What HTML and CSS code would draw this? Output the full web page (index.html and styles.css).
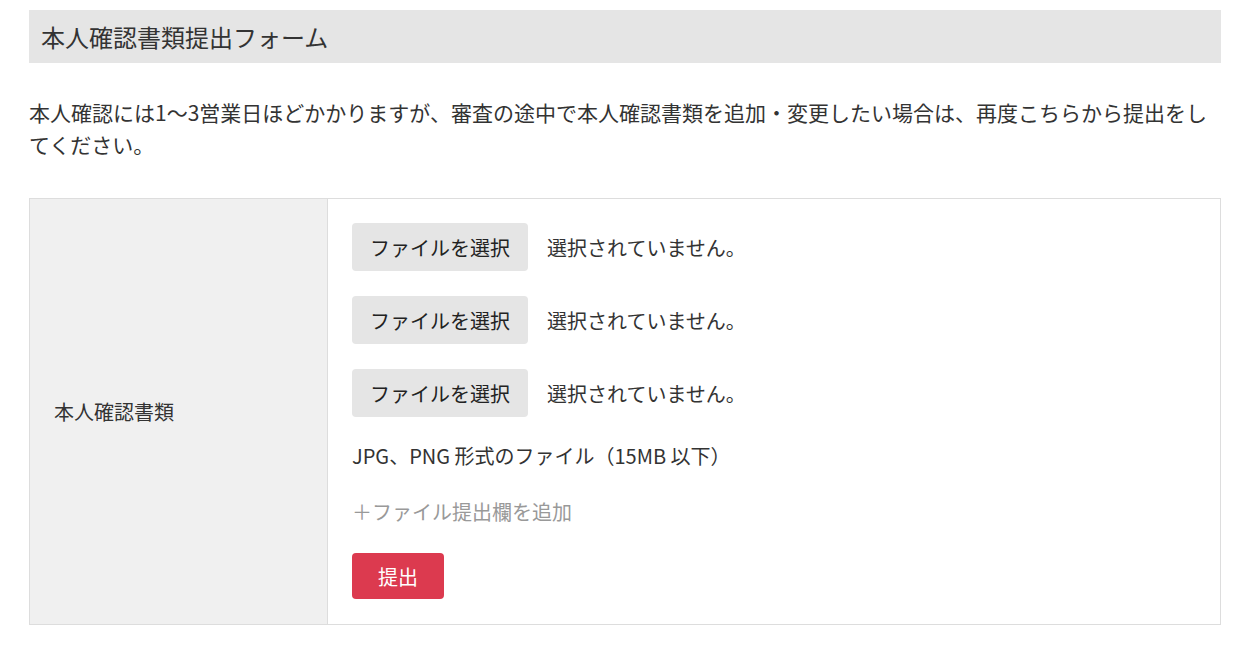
FILE: index.html
```html
<!DOCTYPE html>
<html lang="ja">
<head>
    <meta charset="UTF-8">
    <title>本人確認書類提出フォーム</title>
    <link rel="stylesheet" href="styles.css">
</head>
<body>
    <div class="page">
        <h2 class="page-title">本人確認書類提出フォーム</h2>
        <p class="lead">本人確認には1～3営業日ほどかかりますが、審査の途中で本人確認書類を追加・変更したい場合は、再度こちらから提出をしてください。</p>

        <div class="form-table">
            <div class="form-label">本人確認書類</div>
            <div class="form-body">
                <div class="file-row">
                    <button class="file-btn">ファイルを選択</button>
                    <span class="file-status">選択されていません。</span>
                </div>
                <div class="file-row">
                    <button class="file-btn">ファイルを選択</button>
                    <span class="file-status">選択されていません。</span>
                </div>
                <div class="file-row">
                    <button class="file-btn">ファイルを選択</button>
                    <span class="file-status">選択されていません。</span>
                </div>
                <p class="note">JPG、PNG 形式のファイル（15MB 以下）</p>
                <a class="add-link">＋ファイル提出欄を追加</a>
                <button class="submit-btn">提出</button>
            </div>
        </div>
    </div>
</body>
</html>
```

FILE: styles.css
```css
body {
    margin: 0;
    padding: 0;
    background: #fff;
    color: #333;
    font-family: "Noto Sans CJK JP", "Noto Sans", sans-serif;
}

.page {
    width: 1192px;
    padding: 10px 0 0 29px;
}

.page-title {
    margin: 0;
    height: 53px;
    line-height: 53px;
    padding: 0 12px;
    background: #e5e5e5;
    font-size: 24px;
    font-weight: normal;
    color: #333;
}

.lead {
    margin: 33px 0 38px;
    font-size: 21px;
    line-height: 32px;
}

/* Form table */
.form-table {
    display: flex;
    border: 1px solid #ddd;
}

.form-label {
    box-sizing: border-box;
    width: 298px;
    flex-shrink: 0;
    padding: 0 24px;
    background: #f0f0f0;
    border-right: 1px solid #ddd;
    display: flex;
    align-items: center;
    font-size: 20px;
}

.form-body {
    flex: 1;
    padding: 24px 24px 25px 24px;
    display: flex;
    flex-direction: column;
    align-items: flex-start;
}

.file-row {
    display: flex;
    align-items: center;
    margin-bottom: 25px;
}

.file-btn {
    height: 48px;
    padding: 0 18px;
    background: #e5e5e5;
    border: none;
    border-radius: 4px;
    font-family: inherit;
    font-size: 20px;
    color: #222;
    cursor: pointer;
}

.file-status {
    margin-left: 19px;
    font-size: 20px;
}

.note {
    margin: -2px 0 24px;
    font-size: 20px;
    line-height: 32px;
    color: #333;
}

.add-link {
    font-size: 20px;
    line-height: 32px;
    color: #999;
    margin-bottom: 25px;
    cursor: pointer;
}

.submit-btn {
    height: 46px;
    padding: 0 26px;
    background: #dc3a4f;
    color: #fff;
    border: none;
    border-radius: 4px;
    font-family: inherit;
    font-size: 20px;
    cursor: pointer;
}
```
